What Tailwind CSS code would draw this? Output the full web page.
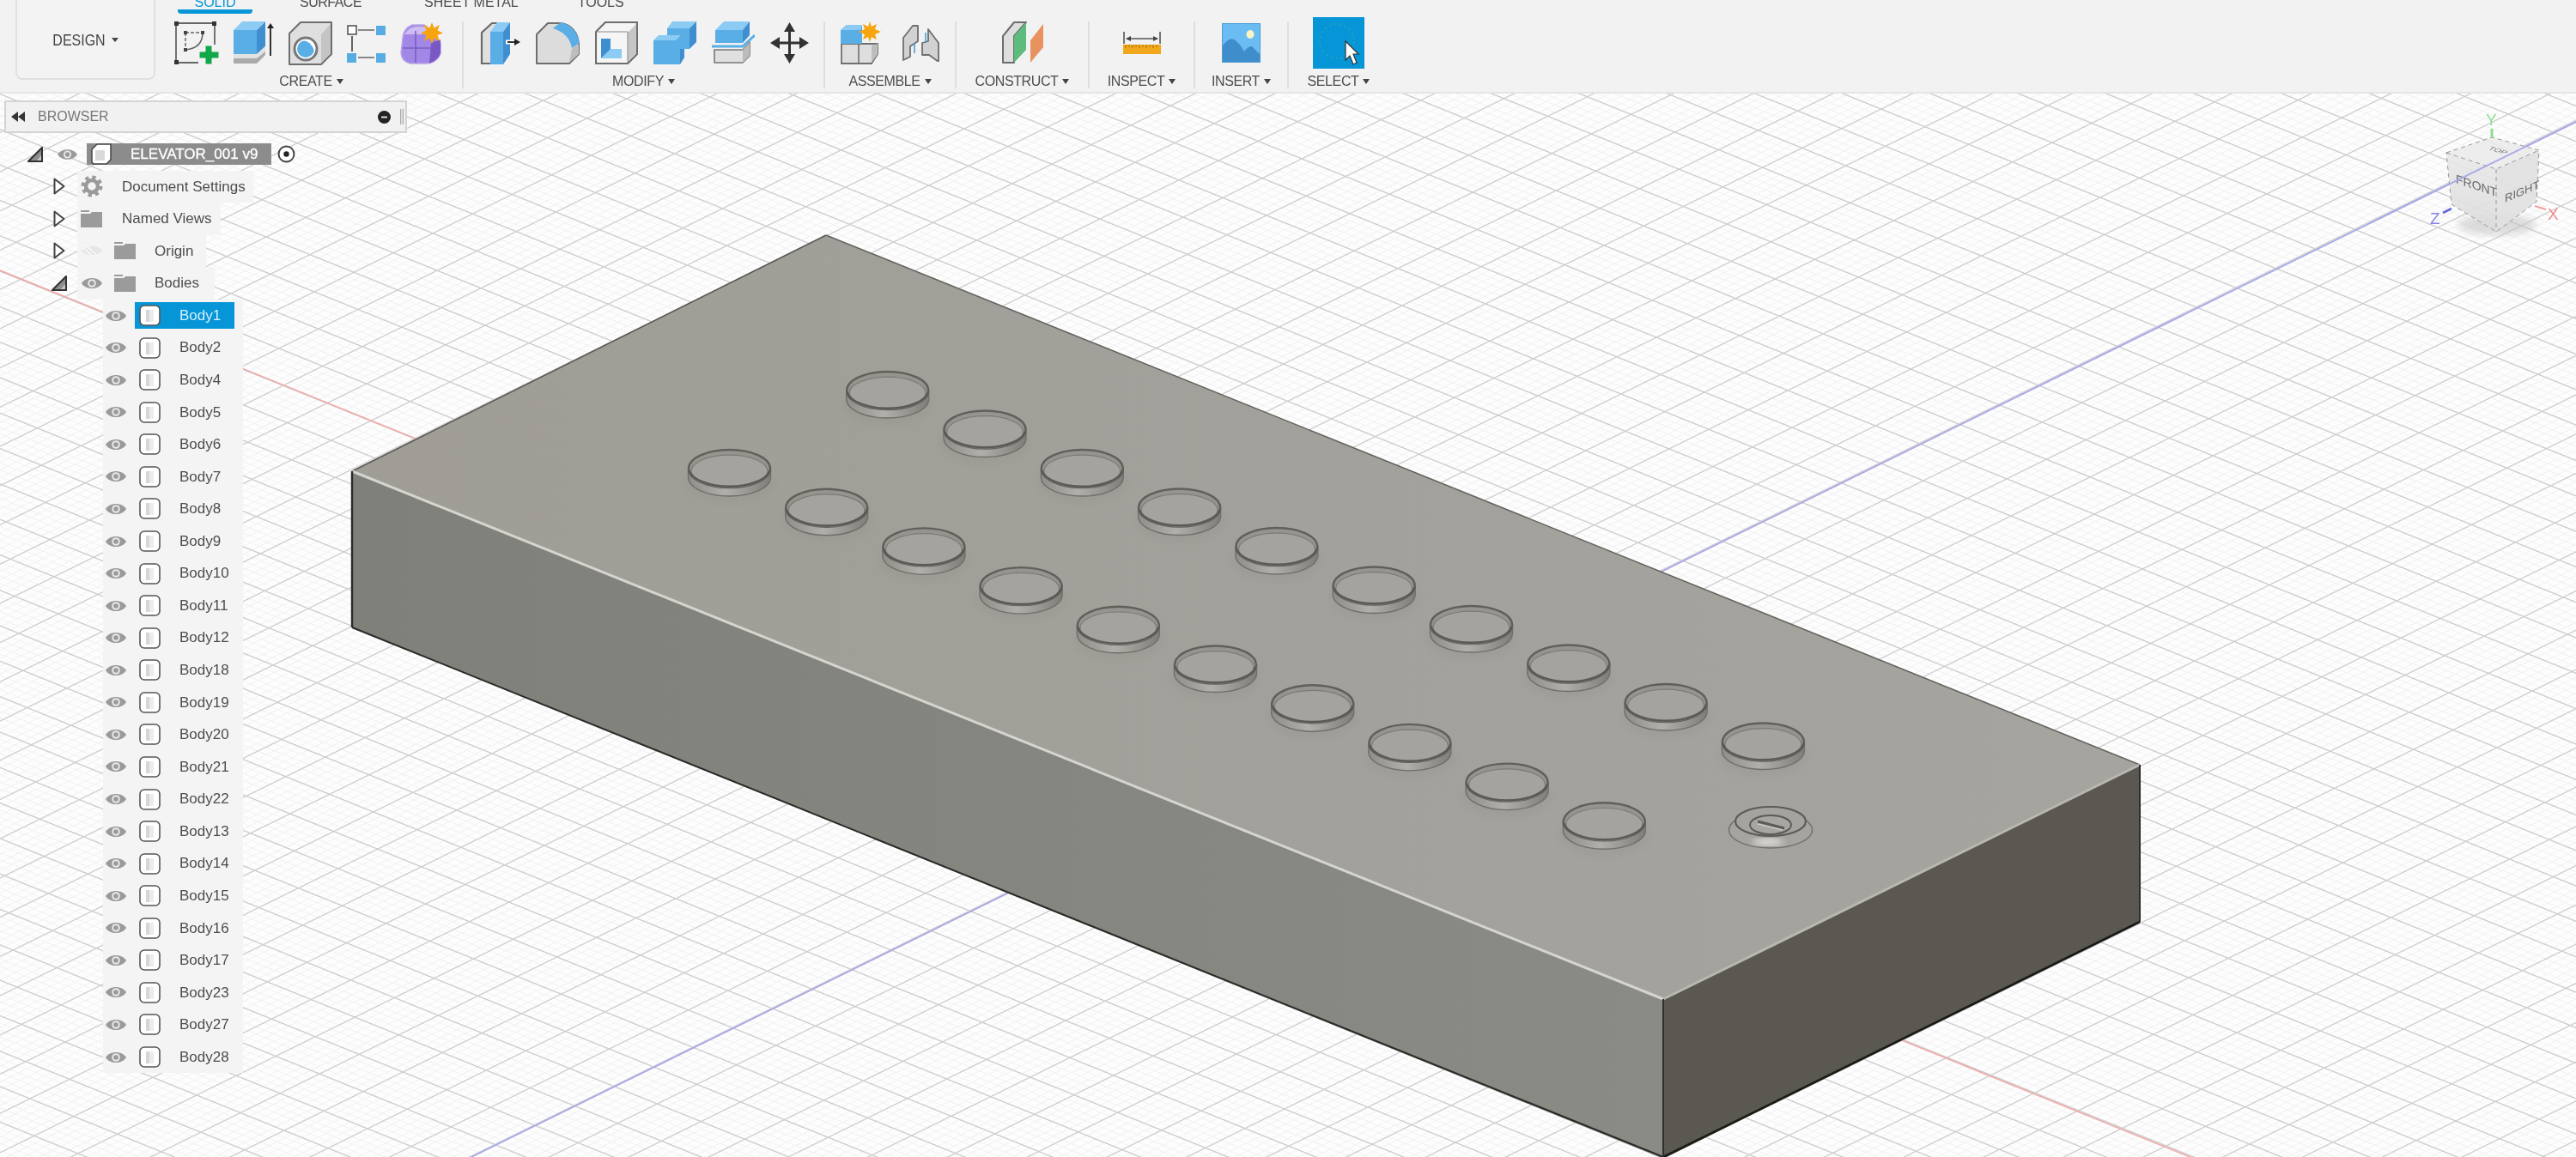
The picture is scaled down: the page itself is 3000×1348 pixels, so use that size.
<!DOCTYPE html>
<html lang="en">
<head>
    <meta charset="UTF-8">
    <title>ELEVATOR_001 v9</title>
    <script src="https://cdn.jsdelivr.net/npm/@tailwindcss/browser@4"></script>
</head>
<body class="bg-white">
<div class="relative w-[3000px] h-[1348px] overflow-hidden bg-[#fdfdfd] font-['Liberation_Sans',Arial,sans-serif] blur-[0.6px]">

    <!-- Shared icons -->
    <svg class="hidden">
        <defs>
            <symbol id="eye" viewBox="0 0 24 16">
                <path d="M0 8C5 0 19 0 24 8C19 16 5 16 0 8Z" fill="#9a9a9a"/>
                <circle cx="12" cy="8" r="4.8" fill="#e8e8e8"/>
                <circle cx="12" cy="8" r="2.8" fill="#9a9a9a"/>
            </symbol>
            <symbol id="eye-off" viewBox="0 0 24 16">
                <path d="M0 8C5 1 19 1 24 8C19 15 5 15 0 8Z" fill="#e6e6e6"/>
                <path d="M5 2L19 14M2 5L14 15" stroke="#f6f6f6" stroke-width="2"/>
            </symbol>
            <symbol id="folder" viewBox="0 0 25 20">
                <path d="M0 0H10V2H0ZM0 4H11L13 2H25V20H0Z" fill="#9b9b9b"/>
            </symbol>
            <symbol id="body" viewBox="0 0 25 25">
                <rect x="1" y="1" width="23" height="23" rx="5" fill="#fff" stroke="#555" stroke-width="1.6"/>
                <rect x="8" y="6" width="9" height="14" fill="#d6d6d6"/>
                <rect x="12" y="6" width="5" height="14" fill="#ececec"/>
            </symbol>
            <symbol id="tri-open" viewBox="0 0 18 18">
                <path d="M1 17L17 1V17Z" fill="#8f8f8f" stroke="#333" stroke-width="2.2" stroke-linejoin="round"/>
                <path d="M11 16L16 10V16Z" fill="#c8c8c8"/>
            </symbol>
            <symbol id="tri-closed" viewBox="0 0 14 20">
                <path d="M1.5 1.5L12.5 10L1.5 18.5Z" fill="#fff" stroke="#444" stroke-width="2" stroke-linejoin="round"/>
            </symbol>
        </defs>
    </svg>

    <!-- Canvas -->
    <svg class="absolute inset-0" width="3000" height="1348" viewBox="0 0 3000 1348">
        <defs>
            <pattern id="grid" width="100" height="100" patternUnits="userSpaceOnUse" patternTransform="matrix(.51 .206 .4608 -.2269 2577.3 531)">
                <path d="M20 0V100M40 0V100M60 0V100M80 0V100M0 20H100M0 40H100M0 60H100M0 80H100" stroke="#f2f2f2" stroke-width="2.6" fill="none"/>
                <path d="M0 0H100M0 100H100M0 0V100M100 0V100" stroke="#d0d0d0" stroke-width="3.4" fill="none"/>
            </pattern>
            <linearGradient id="topFace" x1="0" y1="0" x2="1" y2="0">
                <stop offset="0" stop-color="#9f9d96"/><stop offset="1" stop-color="#a6a49f"/>
            </linearGradient>
            <linearGradient id="leftFace" x1="0" y1="0" x2="1" y2="0">
                <stop offset="0" stop-color="#7f807a"/><stop offset="1" stop-color="#8a8b85"/>
            </linearGradient>
            <linearGradient id="ringSide" x1="0" y1="0" x2="1" y2="0">
                <stop offset="0" stop-color="#8f8e88"/><stop offset=".45" stop-color="#b0afa9"/><stop offset="1" stop-color="#7f7e79"/>
            </linearGradient>
            <filter id="soft"><feGaussianBlur stdDeviation="4"/></filter>
            <g id="ring">
                <ellipse cx="0" cy="16" rx="52" ry="24" fill="#8c8b85" opacity=".22" filter="url(#soft)"/>
                <path d="M-48 0V10A48 22 0 0 0 48 10V0Z" fill="url(#ringSide)" stroke="#706f6a" stroke-width="1.4"/>
                <ellipse rx="47.5" ry="22" fill="#96948e" stroke="#605f5a" stroke-width="2.4"/>
                <ellipse cy="3" rx="44.5" ry="18.8" fill="#a5a39d" stroke="#7c7b76" stroke-width="1.2"/>
                <path d="M-47 2A47.5 22 0 0 0 47 2" fill="none" stroke="#5a5954" stroke-width="2.4"/>
            </g>
            <linearGradient id="cubeL" x1="0" y1="0" x2="0" y2="1">
                <stop offset="0" stop-color="#e8e8e8"/><stop offset="1" stop-color="#dcdcdc"/>
            </linearGradient>
        </defs>

        <rect width="3000" height="1348" fill="#fdfdfd"/>
        <rect width="3000" height="1348" fill="url(#grid)"/>

        <!-- Axes -->
        <path d="M0 315L3000 1530" stroke="#eeabab" stroke-width="1.7"/>
        <path d="M3000 142L549 1348" stroke="#a8a8e8" stroke-width="1.8"/>

        <!-- Model -->
        <polygon points="962,274 410,549 1937,1164 2492,891" fill="url(#topFace)"/>
        <polygon points="410,549 1937,1164 1937,1350 410,731" fill="url(#leftFace)"/>
        <polygon points="1937,1164 2492,891 2492,1074 1937,1350" fill="#5a5850"/>
        <path d="M410 549L962 274" stroke="#585853" stroke-width="1.6"/>
        <path d="M962 274L2492 891" stroke="#65645f" stroke-width="1.6"/>
        <path d="M410 549L1937 1164" stroke="#d6d4cf" stroke-width="3"/>
        <path d="M1937 1164L2492 891" stroke="#b9b7b2" stroke-width="3"/>
        <path d="M410 549V731" stroke="#2c2c2a" stroke-width="2.4"/>
        <path d="M410 731L1937 1348" stroke="#2a2a28" stroke-width="2"/>
        <path d="M2492 891V1074" stroke="#2e2d2a" stroke-width="2"/>
        <path d="M2492 1074L1937 1348" stroke="#1a1a18" stroke-width="2.6"/>
        <path d="M1937 1164V1348" stroke="#2f2f2b" stroke-width="2"/>

        <!-- Buttons -->
        <g id="rings"></g>

        <!-- Key switch -->
        <g transform="translate(2062 962)">
            <ellipse cy="5" rx="48.5" ry="21" fill="#a6a49e" stroke="#72716c" stroke-width="1.4"/>
            <ellipse cx="-3" cy="19" rx="18" ry="3.5" fill="#f2f1ee" filter="url(#soft)"/>
            <ellipse cy="-5" rx="41" ry="17" fill="#a5a39d" stroke="#5c5b56" stroke-width="2.2"/>
            <ellipse cy="-1" rx="24" ry="11" fill="#a8a6a0" stroke="#5c5b56" stroke-width="2"/>
            <path d="M-15 -5L16 3" stroke="#5c5b56" stroke-width="3"/>
            <path d="M-15 -2L14 5" stroke="#dad8d3" stroke-width="1.2"/>
        </g>

        <!-- View cube -->
        <g>
            <ellipse cx="2908" cy="262" rx="46" ry="12" fill="#c5c5c5" opacity=".6" filter="url(#soft)"/>
            <polygon points="2849,178 2907,197 2907,270 2855,238" fill="url(#cubeL)" opacity=".9"/>
            <polygon points="2957,175 2907,197 2907,270 2954,235" fill="#e0e0e0" opacity=".9"/>
            <polygon points="2849,178 2902,160 2957,175 2907,197" fill="#ebebeb" opacity=".9"/>
            <path d="M2849 178L2902 160L2957 175L2954 235L2907 270L2855 238ZM2849 178L2907 197L2957 175M2907 197V270" fill="none" stroke="#999" stroke-width="1" stroke-dasharray="5 4"/>
            <text transform="matrix(1 .34 0 1 2860 213)" font-size="14" fill="#666" font-family="Liberation Sans">FRONT</text>
            <text transform="matrix(1 -.42 0 1 2917 236)" font-size="13" fill="#666" font-family="Liberation Sans">RIGHT</text>
            <text transform="matrix(1 .3 -.6 .5 2897 174)" font-size="10" fill="#777" font-family="Liberation Sans">TOP</text>
            <path d="M2902 160V150" stroke="#8fdc8f" stroke-width="3"/>
            <text x="2895" y="146" font-size="19" fill="#8fdc8f" font-family="Liberation Sans">Y</text>
            <path d="M2952 240L2965 244" stroke="#f0a0a0" stroke-width="2"/>
            <text x="2967" y="256" font-size="19" fill="#f08a8a" font-family="Liberation Sans">X</text>
            <path d="M2855 243L2845 248" stroke="#6a6ae0" stroke-width="3"/>
            <text x="2830" y="261" font-size="19" fill="#8484ea" font-family="Liberation Sans">Z</text>
        </g>
        <path d="M3000 142L2760 260" stroke="#a8a8e8" stroke-width="1.8"/>
    </svg>

    <!-- Ribbon -->
    <header class="absolute inset-x-0 top-0 h-[109px] flex bg-[#f2f2f2] border-b-2 border-[#e5e5e5] text-[#4d4d4d]">
        <!-- Workspace switcher -->
        <button class="ml-[18px] -mt-[8px] w-[163px] h-[101px] pt-[8px] flex items-center justify-center gap-[7px] rounded-lg border-2 border-[#e0e0e0] bg-[#f3f3f3] text-[#444] text-[16px]">
            <span class="scale-y-110">DESIGN</span>
            <span class="w-0 h-0 border-x-[4px] border-t-[5px] border-x-transparent border-t-[#444]"></span>
        </button>

        <div class="ml-[14px] flex flex-col">
            <!-- Tabs -->
            <nav class="flex h-[16px] text-[16px] leading-none">
                <div class="ml-[12px] w-[87px] h-[16px] border-b-[5px] border-[#0696d7] rounded-b-sm text-center text-[#0696d7]"><span class="block -mt-[5px]">SOLID</span></div>
                <span class="ml-[55px] -mt-[5px] tracking-[-0.5px]">SURFACE</span>
                <span class="ml-[73px] -mt-[5px]">SHEET METAL</span>
                <span class="ml-[69px] -mt-[5px]">TOOLS</span>
            </nav>

            <!-- Tool groups -->
            <div class="flex">
                <!-- Create -->
                <section class="w-[343px] flex flex-col items-center">
                    <div class="h-[68px] w-full flex items-center pl-[8px] gap-[17px]">
                        <svg width="52" height="50" viewBox="0 0 52 50">
                            <path d="M5 2H44M2 5V45M47 5V27M5 48H28" stroke="#666" stroke-width="1.8" fill="none"/>
                            <path d="M0 0h5v5H0zM44 0h5v5h-5zM0 45h5v5H0z" fill="#333"/>
                            <path d="M13 13H33M13 13V33" stroke="#666" stroke-width="1.5" stroke-dasharray="4 2" fill="none"/>
                            <path d="M33 13Q33 31 13 33" stroke="#666" stroke-width="1.6" fill="none"/>
                            <path d="M11 11h4v4h-4zM31 11h4v4h-4zM11 31h4v4h-4z" fill="#444"/>
                            <path d="M36 28h8v7h8v8h-8v7h-8v-7h-7v-8h7z" fill="#12a84a" stroke="#f2f2f2"/>
                        </svg>
                        <svg width="47" height="50" viewBox="0 0 47 50">
                            <polygon points="0,10 27,10 27,38 0,38" fill="#5aaee6"/>
                            <polygon points="27,10 37,0 37,29 27,38" fill="#3f8fd0"/>
                            <polygon points="0,10 10,0 37,0 27,10" fill="#8ccbf3"/>
                            <polygon points="0,38 27,38 37,29 37,35 27,43 0,43" fill="#e2e2e2"/>
                            <polygon points="0,43 27,43 37,35 37,39 27,49 0,49" fill="#aaa"/>
                            <path d="M43 40V6" stroke="#333" stroke-width="2"/>
                            <path d="M39 8H47L43 2Z" fill="#222"/>
                        </svg>
                        <svg width="51" height="51" viewBox="0 0 51 51">
                            <path d="M1 50V14L14 1H50V38L38 50Z" fill="#dfdfdf" stroke="#6e6e6e" stroke-width="2" stroke-linejoin="round"/>
                            <path d="M38 15L49 3V37L38 48Z" fill="#c4c4c4"/>
                            <circle cx="20" cy="32" r="13" fill="#fff" stroke="#777" stroke-width="3"/>
                            <circle cx="20" cy="32" r="10" fill="#5aaee6"/>
                            <path d="M15 22Q26 22 30 34Q32 24 24 21Z" fill="#fff"/>
                        </svg>
                        <svg width="45" height="46" viewBox="0 0 45 46">
                            <rect x="1" y="3" width="10" height="10" fill="#fff" stroke="#555" stroke-width="1.6"/>
                            <rect x="34" y="3" width="11" height="11" fill="#58ace4"/>
                            <rect x="0" y="35" width="11" height="11" fill="#58ace4"/>
                            <rect x="34" y="35" width="11" height="11" fill="#58ace4"/>
                            <path d="M13 8H32M13 40H32" stroke="#888" stroke-width="2"/>
                            <path d="M6 15V33" stroke="#555" stroke-width="1.8"/>
                        </svg>
                        <svg width="50" height="49" viewBox="0 0 50 49">
                            <path d="M3 18Q4 7 14 3H28Q32 5 34 12L47 24V36Q44 46 32 48H12Q2 46 1 36Z" fill="#a387e6" stroke="#b9a6e6" stroke-width="1.5"/>
                            <path d="M5 14Q10 6 18 5H30L32 14Z" fill="#cdbdf2"/>
                            <path d="M36 24L47 20V36Q44 44 34 48Z" fill="#7958c6"/>
                            <path d="M3 30H36M18 10V47" stroke="#7a60c2" stroke-width="1.6"/>
                            <polygon points="37,0 39.5,6.5 46,3 43.5,9.5 50,12.5 43.5,15 46,22 39.5,18.5 37,25 34.5,18.5 28,22 30.5,15 24,12.5 30.5,9.5 28,3 34.5,6.5" fill="#f7a40f"/>
                        </svg>
                    </div>
                    <div class="mr-[8px] flex items-center gap-[5px] text-[16px] tracking-[-0.4px] leading-[22px]">CREATE<span class="w-0 h-0 border-x-[4px] border-t-[6px] border-x-transparent border-t-[#444]"></span></div>
                </section>
                <div class="w-[2px] h-[78px] mt-[9px] bg-[#dedede]"></div>

                <!-- Modify -->
                <section class="w-[419px] flex flex-col items-center">
                    <div class="h-[68px] w-full flex items-center pl-[19px] gap-[18px]">
                        <svg width="47" height="50" viewBox="0 0 47 50">
                            <path d="M2 49V13L14 2H22V49Z" fill="#e0e0e0" stroke="#6b6b6b" stroke-width="2.2"/>
                            <polygon points="12,12 27,12 27,50 12,50" fill="#5aaee6"/>
                            <polygon points="12,12 20,1 35,1 27,12" fill="#8ccbf3"/>
                            <polygon points="27,12 35,1 35,38 27,50" fill="#3f8fd0"/>
                            <path d="M30 24H44" stroke="#fff" stroke-width="5"/>
                            <path d="M32 24H42" stroke="#333" stroke-width="2"/>
                            <path d="M40 20L47 24L40 28Z" fill="#222"/>
                        </svg>
                        <svg width="51" height="50" viewBox="0 0 51 50">
                            <path d="M1 49V15L14 2H30Q48 6 50 26V38L39 49Z" fill="#dcdcdc" stroke="#6e6e6e" stroke-width="2" stroke-linejoin="round"/>
                            <path d="M42 32L50 26V38L39 48Z" fill="#bdbdbd"/>
                            <path d="M20 8L29 1Q47 5 51 25L42 31Q39 14 20 8Z" fill="#5aaee6"/>
                        </svg>
                        <svg width="50" height="50" viewBox="0 0 50 50">
                            <path d="M1 49V12L12 1H49V38L38 49Z" fill="#f5f5f5" stroke="#6e6e6e" stroke-width="2.2" stroke-linejoin="round"/>
                            <path d="M38 13L48 3V37L38 47Z" fill="#c6c6c6"/>
                            <path d="M38 12V48M1 12H38" stroke="#8a8a8a" stroke-width="1"/>
                            <polygon points="7,20 18,20 18,33 7,43" fill="#3f8fd0"/>
                            <polygon points="18,32 31,32 31,43 7,43" fill="#8ccbf3"/>
                        </svg>
                        <svg width="50" height="50" viewBox="0 0 50 50">
                            <polygon points="16,8 22,0 50,0 42,8" fill="#8ccbf3"/>
                            <polygon points="16,8 42,8 42,32 16,32" fill="#5aaee6"/>
                            <polygon points="42,8 50,0 50,24 42,32" fill="#3f8fd0"/>
                            <polygon points="0,22 6,16 32,16 26,22" fill="#8ccbf3"/>
                            <polygon points="0,22 31,22 31,50 0,50" fill="#5aaee6"/>
                            <polygon points="31,32 36,32 36,42 31,50" fill="#3f8fd0"/>
                        </svg>
                        <svg width="50" height="50" viewBox="0 0 50 50">
                            <polygon points="4,10 14,0 44,0 36,10" fill="#8ccbf3"/>
                            <polygon points="4,10 36,10 36,25 4,25" fill="#5aaee6"/>
                            <polygon points="36,10 44,0 44,16 36,25" fill="#3f8fd0"/>
                            <path d="M0 29H36L50 16" stroke="#5aaee6" stroke-width="3" fill="none"/>
                            <path d="M3 33H36L44 25V40L36 48H3Z" fill="#e0e0e0" stroke="#777" stroke-width="1.6"/>
                            <path d="M36 33L44 25V40L36 48Z" fill="#bbb"/>
                        </svg>
                        <svg width="45" height="48" viewBox="0 0 45 48">
                            <path d="M22.5 6V42M6 24H39" stroke="#333" stroke-width="3"/>
                            <path d="M22.5 0L29 11H16ZM22.5 48L29 37H16ZM0 24L11 17V31ZM45 24L34 17V31Z" fill="#333"/>
                        </svg>
                    </div>
                    <div class="flex items-center gap-[5px] text-[16px] tracking-[-0.4px] leading-[22px]">MODIFY<span class="w-0 h-0 border-x-[4px] border-t-[6px] border-x-transparent border-t-[#444]"></span></div>
                </section>
                <div class="w-[2px] h-[78px] mt-[9px] bg-[#dedede]"></div>

                <!-- Assemble -->
                <section class="w-[151px] flex flex-col items-center">
                    <div class="h-[68px] w-full flex items-center pl-[18px] gap-[22px]">
                        <svg width="49" height="50" viewBox="0 0 49 50">
                            <path d="M1 49V26H43V38L36 49Z" fill="#dedede" stroke="#707070" stroke-width="1.8"/>
                            <path d="M21 26V49" stroke="#707070" stroke-width="1.6"/>
                            <path d="M36 28L43 26V38L36 48Z" fill="#bdbdbd"/>
                            <polygon points="0,10 7,4 25,4 25,26 0,26" fill="#5aaee6"/>
                            <polygon points="0,10 7,4 25,4 23,10" fill="#8ccbf3"/>
                            <polygon points="34,0 36,6 42,3 40,9 47,12 40,15 42,21 36,18 34,24 32,18 26,21 28,15 21,12 28,9 26,3 32,6" fill="#f7a40f"/>
                        </svg>
                        <svg width="44" height="44" viewBox="0 0 44 44">
                            <path d="M2 42V16L13 2H19V20L10 26V38Z" fill="#d2d2d2" stroke="#6e6e6e" stroke-width="1.8" stroke-linejoin="round"/>
                            <path d="M31 6L43 22V44L32 36H24V22L31 20Z" fill="#d2d2d2" stroke="#6e6e6e" stroke-width="1.8" stroke-linejoin="round"/>
                            <path d="M15 22V34M28 10V22" stroke="#4a9ed8" stroke-width="1.6"/>
                        </svg>
                    </div>
                    <div class="flex items-center gap-[5px] text-[16px] tracking-[-0.4px] leading-[22px]">ASSEMBLE<span class="w-0 h-0 border-x-[4px] border-t-[6px] border-x-transparent border-t-[#444]"></span></div>
                </section>
                <div class="w-[2px] h-[78px] mt-[9px] bg-[#dedede]"></div>

                <!-- Construct -->
                <section class="w-[153px] flex flex-col items-center">
                    <div class="h-[68px] w-full flex items-center justify-center">
                        <svg width="48" height="50" viewBox="0 0 48 50">
                            <path d="M1 48V17L14 1H28L14 17V48Z" fill="#dedede" stroke="#6e6e6e" stroke-width="2" stroke-linejoin="round"/>
                            <polygon points="14,17 28,1 28,33 14,48" fill="#5cbb7d"/>
                            <polygon points="33,22 48,3 48,30 33,48" fill="#e8935f"/>
                        </svg>
                    </div>
                    <div class="flex items-center gap-[5px] text-[16px] tracking-[-0.4px] leading-[22px]">CONSTRUCT<span class="w-0 h-0 border-x-[4px] border-t-[6px] border-x-transparent border-t-[#444]"></span></div>
                </section>
                <div class="w-[2px] h-[78px] mt-[9px] bg-[#dedede]"></div>

                <!-- Inspect -->
                <section class="w-[121px] flex flex-col items-center">
                    <div class="h-[68px] w-full flex items-center justify-center">
                        <svg width="44" height="26" viewBox="0 0 44 26">
                            <path d="M1 0V14M43 0V14M4 8H40" stroke="#555" stroke-width="1.6"/>
                            <path d="M3 8L9 5V11ZM41 8L35 5V11Z" fill="#444"/>
                            <rect y="15" width="44" height="11" fill="#f2a81d"/>
                            <path d="M3 15v4M7 15v3M11 15v4M15 15v3M19 15v4M23 15v3M27 15v4M31 15v3M35 15v4M39 15v3" stroke="#a8700a" stroke-width="1"/>
                        </svg>
                    </div>
                    <div class="flex items-center gap-[5px] text-[16px] tracking-[-0.4px] leading-[22px]">INSPECT<span class="w-0 h-0 border-x-[4px] border-t-[6px] border-x-transparent border-t-[#444]"></span></div>
                </section>
                <div class="w-[2px] h-[78px] mt-[9px] bg-[#dedede]"></div>

                <!-- Insert -->
                <section class="w-[107px] flex flex-col items-center">
                    <div class="h-[68px] w-full flex items-center justify-center">
                        <svg width="45" height="46" viewBox="0 0 45 46">
                            <rect x="0.5" y="0.5" width="44" height="45" fill="#6bbcf2" stroke="#4a9ed8"/>
                            <ellipse cx="33" cy="13" rx="4.5" ry="5" fill="#fbf4c4"/>
                            <path d="M1 45V26Q9 16 14 19Q20 22 26 33Q31 26 35 27L44 36V45Z" fill="#3f8ecb"/>
                        </svg>
                    </div>
                    <div class="flex items-center gap-[5px] text-[16px] tracking-[-0.4px] leading-[22px]">INSERT<span class="w-0 h-0 border-x-[4px] border-t-[6px] border-x-transparent border-t-[#444]"></span></div>
                </section>
                <div class="w-[2px] h-[78px] mt-[9px] bg-[#dedede]"></div>

                <!-- Select -->
                <section class="w-[116px] flex flex-col items-center">
                    <div class="h-[68px] w-full flex items-center justify-center">
                        <svg width="60" height="60" viewBox="0 0 60 60">
                            <rect width="60" height="60" fill="#0696d7"/>
                            <circle cx="28" cy="28" r="20" fill="none" stroke="#1c9fc8" stroke-width="2" stroke-dasharray="3 3"/>
                            <path d="M38 28V50L43 45L47 55L51 53L47 43L53 43Z" fill="#fff" stroke="#333" stroke-width="1.2"/>
                        </svg>
                    </div>
                    <div class="flex items-center gap-[5px] text-[16px] tracking-[-0.4px] leading-[22px]">SELECT<span class="w-0 h-0 border-x-[4px] border-t-[6px] border-x-transparent border-t-[#444]"></span></div>
                </section>
            </div>
        </div>
    </header>

    <!-- Browser panel -->
    <aside class="absolute left-0 top-[117px] w-[480px] text-[17px] text-[#4d4d4d]">
        <div class="ml-[5px] w-[469px] h-[38px] flex items-center bg-[#f1f1f1] border-2 border-[#d4d4d4] text-[16px] text-[#777]">
            <svg class="ml-[6px]" width="16" height="12" viewBox="0 0 16 12"><path d="M8 0V12L0 6ZM16 0V12L8 6Z" fill="#333"/></svg>
            <span class="ml-[15px]">BROWSER</span>
            <svg class="ml-auto" width="15" height="15" viewBox="0 0 15 15"><circle cx="7.5" cy="7.5" r="7.5" fill="#222"/><rect x="4" y="6.5" width="7" height="2" fill="#ddd"/></svg>
            <span class="ml-[11px] mr-[2px] w-[4px] h-[18px] border-x border-[#aaa] bg-[#ddd]"></span>
        </div>

        <ul id="tree" class="mt-[6px]">
            <li class="h-[37.57px] flex items-center">
                <svg class="ml-[32px]" width="18" height="18"><use href="#tri-open"/></svg>
                <svg class="ml-[17px]" width="23" height="16"><use href="#eye"/></svg>
                <div class="ml-[11px] w-[215px] h-[25px] flex items-center bg-[#8c8c8c] text-white">
                    <svg class="ml-[5px]" width="24" height="25" viewBox="0 0 24 25">
                        <path d="M1 7L7 1H23V19L18 24H3L1 22Z" fill="#fff" stroke="#444" stroke-width="1.5"/>
                        <rect x="5" y="8" width="11" height="12" fill="#d9d9d9"/>
                    </svg>
                    <span class="ml-[22px] [-webkit-text-stroke:0.3px_white]">ELEVATOR_001 v9</span>
                </div>
                <svg class="ml-[7px]" width="21" height="21" viewBox="0 0 21 21"><circle cx="10.5" cy="10.5" r="9" fill="#fff" stroke="#444" stroke-width="2"/><circle cx="10.5" cy="10.5" r="3.2" fill="#222"/></svg>
            </li>
            <li class="h-[37.57px] flex items-center">
                <svg class="ml-[62px]" width="14" height="20"><use href="#tri-closed"/></svg>
                <div class="ml-[14px] w-[205px] h-full flex items-center bg-[#f4f4f4]">
                    <svg class="ml-[4px]" width="26" height="26" viewBox="0 0 26 26">
                        <circle cx="13" cy="13" r="7" fill="none" stroke="#9a9a9a" stroke-width="4.5"/>
                        <circle cx="13" cy="13" r="10.5" fill="none" stroke="#9a9a9a" stroke-width="4" stroke-dasharray="4.2 4.05"/>
                    </svg>
                    <span class="ml-[22px]">Document Settings</span>
                </div>
            </li>
            <li class="h-[37.57px] flex items-center">
                <svg class="ml-[62px]" width="14" height="20"><use href="#tri-closed"/></svg>
                <div class="ml-[14px] w-[167px] h-full flex items-center bg-[#f4f4f4]">
                    <svg class="ml-[4px]" width="25" height="20"><use href="#folder"/></svg>
                    <span class="ml-[23px]">Named Views</span>
                </div>
            </li>
            <li class="h-[37.57px] flex items-center">
                <svg class="ml-[62px]" width="14" height="20"><use href="#tri-closed"/></svg>
                <div class="ml-[14px] w-[150px] h-full flex items-center bg-[#f4f4f4]">
                    <svg class="ml-[5px]" width="24" height="16"><use href="#eye-off"/></svg>
                    <svg class="ml-[14px]" width="25" height="20"><use href="#folder"/></svg>
                    <span class="ml-[22px]">Origin</span>
                </div>
            </li>
            <li class="h-[37.57px] flex items-center">
                <svg class="ml-[60px]" width="18" height="18"><use href="#tri-open"/></svg>
                <div class="ml-[12px] w-[160px] h-full flex items-center bg-[#f4f4f4]">
                    <svg class="ml-[5px]" width="24" height="16"><use href="#eye"/></svg>
                    <svg class="ml-[14px]" width="25" height="20"><use href="#folder"/></svg>
                    <span class="ml-[22px]">Bodies</span>
                </div>
            </li>
        </ul>
    </aside>

    <script>
        // Body rows of the browser tree
        const bodies = ['Body1','Body2','Body4','Body5','Body6','Body7','Body8','Body9','Body10','Body11','Body12','Body18','Body19','Body20','Body21','Body22','Body13','Body14','Body15','Body16','Body17','Body23','Body27','Body28'];
        const tree = document.getElementById('tree');
        bodies.forEach((name, i) => {
            const selected = i === 0;
            const chip = selected ? 'w-[116px] h-[31px] ml-[10px] flex items-center bg-[#0696d7] text-[#d6f0ff]' : 'w-[116px] h-[31px] ml-[10px] flex items-center';
            tree.insertAdjacentHTML('beforeend', `
                <li class="h-[37.57px] flex items-center">
                    <div class="ml-[120px] w-[163px] h-full flex items-center bg-[#f4f4f4]">
                        <svg class="ml-[3px]" width="24" height="16"><use href="#eye"/></svg>
                        <div class="${chip}">
                            <svg class="ml-[5px]" width="25" height="25"><use href="#body"/></svg>
                            <span class="ml-[22px]">${name}</span>
                        </div>
                    </div>
                </li>`);
        });

        // Two rows of ten buttons on the model
        const rings = document.getElementById('rings');
        let markup = '';
        for (let i = 0; i < 10; i++) {
            markup += `<use href="#ring" x="${1033.7 + i * 113.3}" y="${455 + i * 45.5}"/>`;
            markup += `<use href="#ring" x="${849.5 + i * 113.2}" y="${546 + i * 45.7}"/>`;
        }
        rings.innerHTML = markup;
    </script>
</div>
</body>
</html>
